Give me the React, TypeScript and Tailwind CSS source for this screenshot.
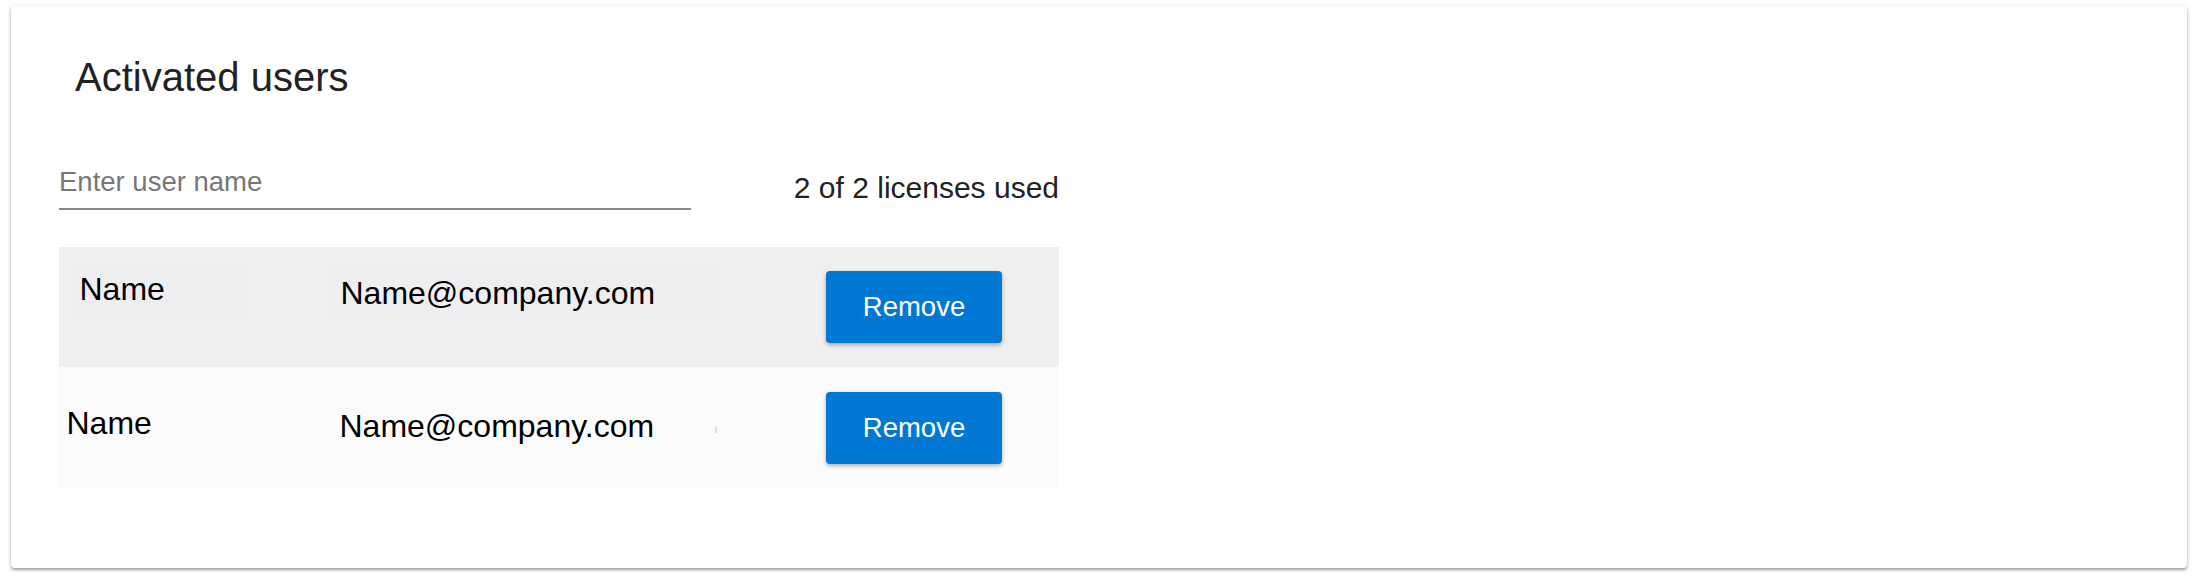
import React from "react";

const font = { fontFamily: '"Liberation Sans", Arial, sans-serif' };

export default function App() {
  return (
    <div className="w-[2194px] h-[580px] bg-white pt-[6px] pl-[11px]" style={font}>
      <div className="w-[2176px] h-[562px] rounded-[4px] bg-white shadow-[0_2px_3px_rgba(0,0,0,0.35),0_0_6px_rgba(0,0,0,0.08)] pt-[47px] pl-[48px]">
        <h1 className="ml-[16px] text-[40px] leading-[48px] font-normal text-[#222222]">
          Activated users
        </h1>

        <div className="mt-[65px] flex w-[1000px] items-start justify-between">
          <input
            type="text"
            placeholder="Enter user name"
            className="w-[632px] h-[44px] pb-[10px] border-b-2 border-[#8a8a8a] bg-transparent text-[27.5px] leading-[32px] text-[#222] placeholder:text-[#777777] outline-none"
            style={font}
          />
          <div className="mt-[4px] text-[30px] leading-[36px] text-[#222222]">
            2 of 2 licenses used
          </div>
        </div>

        <div className="mt-[37px] w-[1000px]">
          {/* Row 1 */}
          <div className="flex h-[120px] items-start bg-[#efefef] pl-[16px]">
            <div className="mt-[18px] h-[51px] w-[168px] bg-[#eeeef0] pl-[4.5px] pt-[5px] text-[32px] leading-[38px] text-black">
              Name
            </div>
            <div className="ml-[92px] mt-[21px] h-[52px] w-[381px] bg-[#eeeef0] pl-[5.5px] pt-[6px] text-[32px] leading-[38px] text-black">
              Name@company.com
            </div>
            <button className="ml-auto mr-[57px] self-center flex h-[72px] w-[176px] items-center justify-center rounded-[4px] bg-[#0078d4] text-[27.5px] text-white shadow-[0_2px_4px_rgba(0,0,0,0.3)]">
              Remove
            </button>
          </div>

          {/* Row 2 */}
          <div className="flex h-[122px] items-start bg-[#fbfbfb] pl-[7.5px]">
            <div className="mt-[37px] w-[273px] text-[32px] leading-[38px] text-black">Name</div>
            <div className="mt-[40px] w-[375px] text-[32px] leading-[38px] text-black">
              Name@company.com
            </div>
            <div className="mt-[60px] h-[6px] w-[2px] bg-[#dcdcdc]" />
            <button className="ml-auto mr-[57px] self-center flex h-[72px] w-[176px] items-center justify-center rounded-[4px] bg-[#0078d4] text-[27.5px] text-white shadow-[0_2px_4px_rgba(0,0,0,0.3)]">
              Remove
            </button>
          </div>
        </div>
      </div>
    </div>
  );
}
